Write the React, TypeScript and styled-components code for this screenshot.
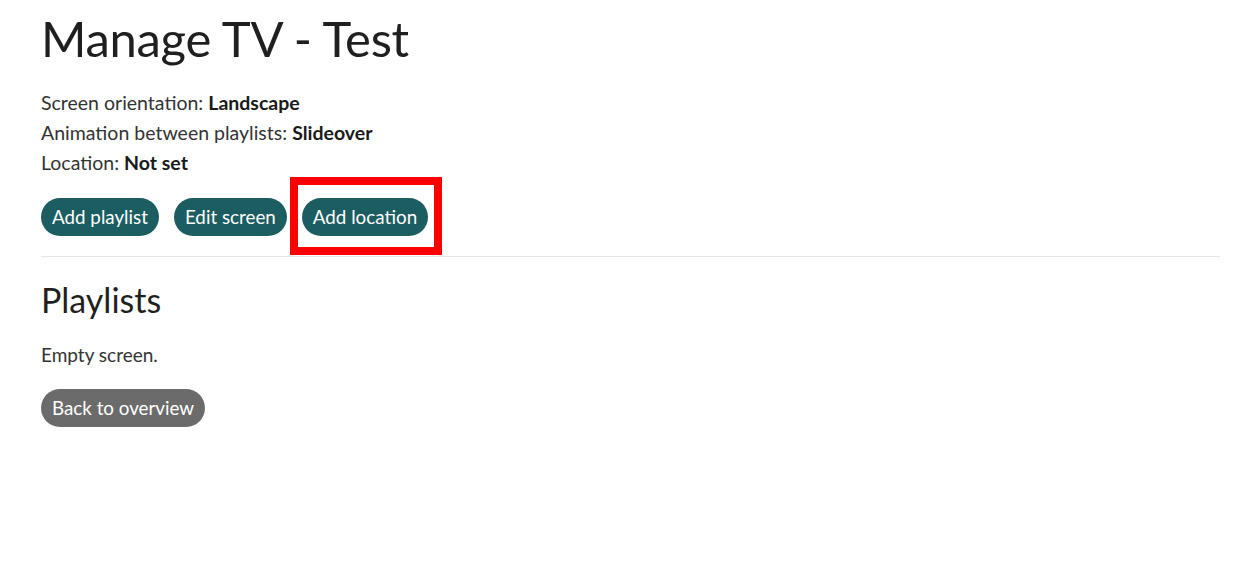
import React from "react";
import styled, { createGlobalStyle } from "styled-components";

const GlobalStyle = createGlobalStyle`
  html, body { margin: 0; padding: 0; background: #ffffff; }
  body { font-family: "Lato", "Noto Sans", sans-serif; color: #222; }
  * { box-sizing: border-box; }
`;

const Page = styled.main`
  padding: 6px 15px 0 41px;
  width: 1235px;
`;

const Title = styled.h1`
  margin: 0 0 18px;
  font-size: 49px;
  font-weight: 400;
  line-height: 64px;
  color: #1f1f1f;
  letter-spacing: -0.3px;
`;

const InfoList = styled.div`
  display: flex;
  flex-direction: column;
`;

const InfoLine = styled.div`
  font-size: 19.5px;
  line-height: 30px;
  color: #333;
`;

const Value = styled.strong`
  font-weight: 700;
  color: #1a1a1a;
`;

const ButtonRow = styled.div`
  display: flex;
  gap: 15px;
  margin-top: 20px;
  margin-bottom: 20px;
`;

const PillButton = styled.button<{ $variant?: "primary" | "secondary" }>`
  font-family: inherit;
  font-size: 18.8px;
  line-height: 20px;
  height: 38px;
  padding: 0 11px;
  border: none;
  border-radius: 19px;
  color: #ffffff;
  background: ${(p) => (p.$variant === "secondary" ? "#6b6b6b" : "#1c5d62")};
  cursor: pointer;
  white-space: nowrap;
`;

const Highlight = styled.span`
  position: relative;
  display: inline-flex;
  &::after {
    content: "";
    position: absolute;
    left: -12px;
    right: -14px;
    top: -21px;
    bottom: -19px;
    border: 8px solid #ff0000;
    pointer-events: none;
  }
`;

const Divider = styled.hr`
  border: none;
  border-top: 1px solid #e6e6e6;
  margin: 0;
  width: 1179px;
`;

const SectionTitle = styled.h2`
  margin: 21px 0 21px;
  font-size: 34px;
  font-weight: 400;
  line-height: 44px;
  color: #1f1f1f;
`;

const Paragraph = styled.p`
  margin: 0 0 22px;
  font-size: 19px;
  line-height: 24px;
  color: #333;
`;

export default function App() {
  return (
    <>
      <GlobalStyle />
      <Page>
        <Title>Manage TV - Test</Title>
        <InfoList>
          <InfoLine>
            Screen orientation: <Value>Landscape</Value>
          </InfoLine>
          <InfoLine>
            Animation between playlists: <Value>Slideover</Value>
          </InfoLine>
          <InfoLine>
            Location: <Value>Not set</Value>
          </InfoLine>
        </InfoList>
        <ButtonRow>
          <PillButton>Add playlist</PillButton>
          <PillButton>Edit screen</PillButton>
          <Highlight>
            <PillButton>Add location</PillButton>
          </Highlight>
        </ButtonRow>
        <Divider />
        <SectionTitle>Playlists</SectionTitle>
        <Paragraph>Empty screen.</Paragraph>
        <PillButton $variant="secondary">Back to overview</PillButton>
      </Page>
    </>
  );
}
